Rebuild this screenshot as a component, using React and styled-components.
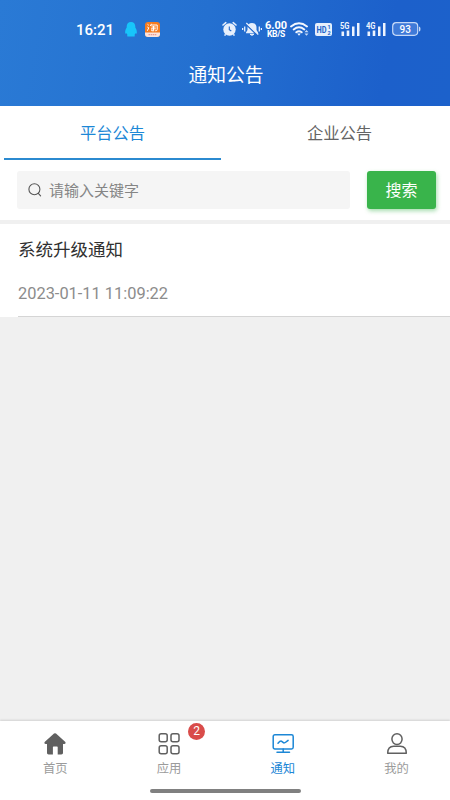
import React, { useState } from 'react'
import styled, { createGlobalStyle } from 'styled-components'

const GlobalStyle = createGlobalStyle`
  * {
    box-sizing: border-box;
  }
  body {
    margin: 0;
    background: #f0f0f0;
    font-family: Roboto, "Noto Sans CJK SC", sans-serif;
  }
`
const Page = styled.div`
  display: flex;
  flex-direction: column;
  width: 450px;
  height: 800px;
  overflow: hidden;
  background: #f0f0f0;
`
const Header = styled.header`
  height: 106px;
  flex: none;
  color: #fff;
  background: linear-gradient(100deg, #2a7ad5 0%, #2470d0 45%, #1c60cb 85%, #1c61cb 100%);
`
const StatusBar = styled.div`
  display: flex;
  align-items: center;
  height: 58px;
  padding-left: 76px;
`
const Time = styled.span`
  width: 49px;
  padding-top: 1px;
  font-size: 15px;
  font-weight: 500;
  line-height: 18px;
`
const StatusIcon = styled.svg`
  display: block;
  flex: none;
  width: ${(props) => props.$w}px;
  height: ${(props) => props.$h}px;
  margin-left: ${(props) => props.$gap || 0}px;
`
const Speed = styled.div`
  display: flex;
  flex-direction: column;
  align-items: center;
  width: 24px;
  margin-left: 2px;
  font-size: 11px;
  font-weight: 700;
  line-height: 9px;
  white-space: nowrap;
`
const SpeedValue = styled.span`
  height: 9px;
`
const SpeedUnit = styled.span`
  height: 8px;
  font-size: 8.5px;
  letter-spacing: -0.3px;
  line-height: 8px;
`
const Title = styled.h1`
  margin: 0;
  font-size: 18.8px;
  font-weight: 400;
  line-height: 28px;
  padding-top: 4px;
  text-align: center;
  padding-left: 2px;
`
const Tabs = styled.nav`
  display: flex;
  flex: none;
  gap: 10px;
  height: 54px;
  padding-left: 4px;
  background: #fff;
`
const Tab = styled.button`
  flex: none;
  width: 217px;
  padding: 0;
  border: 0;
  border-bottom: 2px solid ${(props) => (props.$active ? '#2b8ad0' : 'transparent')};
  background: none;
  color: ${(props) => (props.$active ? '#1c87d6' : '#646464')};
  font-family: inherit;
  font-size: 16.3px;
`
const SearchRow = styled.div`
  display: flex;
  flex: none;
  height: 64px;
  padding: 11px 14px 0 17px;
  border-bottom: 4px solid #f0f0f0;
  background: #fff;
`
const SearchBox = styled.label`
  display: flex;
  align-items: center;
  width: 333px;
  height: 38px;
  padding-left: 11px;
  border-radius: 3px;
  background: #f5f5f5;
`
const SearchInput = styled.input`
  width: 260px;
  margin-left: 7px;
  padding: 1px 0 0;
  border: 0;
  outline: 0;
  background: none;
  font-family: inherit;
  font-size: 15px;
  &::placeholder {
    color: #858585;
  }
`
const SearchButton = styled.button`
  width: 69px;
  height: 38px;
  margin-left: 17px;
  padding: 0 0 2px;
  border: 0;
  border-radius: 3px;
  background: #39b44b;
  box-shadow: 1px 2px 4px rgba(57, 180, 75, 0.45);
  color: #fff;
  font-family: inherit;
  font-size: 16px;
`
const List = styled.main`
  flex: 1;
`
const Notice = styled.article`
  height: 93px;
  padding: 12px 0 0 18px;
  background: #fff;
`
const NoticeBody = styled.div`
  height: 81px;
  padding-top: 1px;
  border-bottom: 1px solid #d5d5d5;
`
const NoticeTitle = styled.h2`
  margin: 0;
  color: #303030;
  font-size: 17.5px;
  font-weight: 400;
  line-height: 26px;
`
const NoticeDate = styled.time`
  display: block;
  margin-top: 21px;
  color: #8c8c8c;
  font-size: 16.4px;
  line-height: 20px;
`
const Footer = styled.footer`
  display: flex;
  flex-direction: column;
  align-items: center;
  flex: none;
  height: 79px;
  background: #fff;
  box-shadow: 0 -1px 2px rgba(0, 0, 0, 0.13);
`
const NavItems = styled.div`
  display: flex;
  flex: none;
  width: 455px;
  height: 68px;
`
const NavItem = styled.div`
  display: flex;
  flex: 1;
  flex-direction: column;
  align-items: center;
  padding: 11px 0 0 2px;
  color: ${(props) => (props.$active ? '#1c87d6' : '#9b9b9b')};
  font-size: 12.3px;
  line-height: 18px;
`
const NavIcon = styled.div`
  position: relative;
  height: 24px;
  margin-bottom: 4px;
  color: ${(props) => (props.$active ? '#1c87d6' : '#606060')};
`
const Badge = styled.span`
  position: absolute;
  top: -9px;
  left: 31px;
  width: 17px;
  height: 17px;
  border-radius: 50%;
  background: #d94c4a;
  color: #fff;
  font-size: 12px;
  line-height: 17px;
  text-align: center;
`
const HomeBar = styled.div`
  width: 151px;
  height: 4px;
  border-radius: 2px;
  background: #808080;
`

const QQIcon = () => (
  <StatusIcon $w={12} $h={15} viewBox="0 0 12 15" fill="#18c5fa">
    <path d="M6 0C3.200 0 1.700 1.800 1.700 4.500v1C.6 7 0 9 .2 11c.1.900.900.900 1.500.3.1.700.4 1.200.900 1.600-.9.500-.6 1.600.7 1.600H8.700c1.300 0 1.600-1.100.7-1.600.5-.4.800-.9.900-1.600.6.600 1.400.600 1.500-.3C12 9 11.400 7 10.300 5.500v-1C10.300 1.800 8.800 0 6 0z" />
  </StatusIcon>
)

const TaobaoIcon = () => (
  <StatusIcon $w={15} $h={15} $gap={8} viewBox="0 0 15 15">
    <rect width="15" height="15" rx="3" fill="#f57c20" />
    <path d="M0 10.500h15V12a3 3 0 0 1-3 3H3a3 3 0 0 1-3-3z" fill="#fbe4df" />
    <path d="M2.500 2.300l1.300 1M2.300 5l1.500.8-1.500 3M6.500 1.800L5.300 4M6 3h6.200v4.500q0 1.500-2 1.300M6.500 5h4.200M6 6.800h4.800M8.500 4v4.500M6.700 7.500v1.300h2.500" fill="none" stroke="#fff" strokeWidth="1" />
    <path d="M3.500 12.700h8" stroke="#e99a92" strokeWidth="1.300" strokeDasharray="1.500 .6" />
  </StatusIcon>
)

const AlarmIcon = () => (
  <StatusIcon $w={15} $h={16} $gap={62} viewBox="0 0 15 16" fill="none" stroke="#e6effc">
    <circle cx="7.500" cy="8.500" r="6.200" fill="#e6effc" stroke="none" />
    <path d="M1 4L3.800 1.700M14 4L11.200 1.700" strokeWidth="1.600" strokeLinecap="round" />
    <path d="M7.300 5.500v3.200l2 1.300" stroke="#2368cc" strokeWidth="1.100" />
    <path d="M3.600 13.200l-1 1.400M11.400 13.200l1 1.400" strokeWidth="1.500" />
  </StatusIcon>
)

const MuteIcon = () => (
  <StatusIcon $w={20} $h={16} $gap={5} viewBox="0 0 20 16" fill="none" stroke="#e6effc">
    <path d="M10 2c-3 0-4.500 2-4.500 4.500V9L4 11.500v.8h12v-.8L14.500 9V6.500C14.500 4 13 2 10 2z" fill="#e6effc" stroke="none" />
    <path d="M8 13.300q2 2 4 0z" fill="#e6effc" />
    <path d="M4 3.300l11.500 11" stroke="#2368cc" strokeWidth="1.500" />
    <path d="M4.300 2l12 11.500" strokeWidth="1.300" />
    <path d="M2.700 5.500v5M17.300 5.500v5M.6 7v2M19.400 7v2" strokeWidth="1.300" />
  </StatusIcon>
)

const WifiIcon = () => (
  <StatusIcon $w={19} $h={16} $gap={2} viewBox="0 0 19 16" fill="none" stroke="#f3f7fe" strokeWidth="1.900">
    <path d="M1 5.500q8-6.500 16 0M3.700 8.500q5.300-4.300 10.600 0M6.300 11.300q2.700-2.200 5.400 0" strokeLinecap="round" />
    <path d="M7.200 12.500h3.600L9 14.700z" fill="#f3f7fe" stroke="none" />
    <path d="M14.500 11.200l2-2.200 2 2.200zM14.500 12.500l2 2.200 2-2.200z" fill="#c6daf7" stroke="none" />
  </StatusIcon>
)

const HdIcon = () => (
  <StatusIcon $w={17} $h={13} $gap={6} viewBox="0 0 17 13">
    <rect width="17" height="13" rx="2" fill="#e6effc" />
    <g fill="#2063c9" fontFamily="Roboto" fontWeight="700">
      <text x="1.500" y="10" fontSize="9.500" textLength="10" lengthAdjust="spacingAndGlyphs">HD</text>
      <text x="12.500" y="6" fontSize="5.500">1</text>
      <text x="12.500" y="11.700" fontSize="5.500">2</text>
    </g>
  </StatusIcon>
)

const SignalIcon = ({ label, gap }) => (
  <StatusIcon $w={20} $h={15} $gap={gap} viewBox="0 0 20 15" fill="#eef4fe">
    <text x="0" y="7" fontSize="9" fontFamily="Roboto" fontWeight="700" textLength="9.500" lengthAdjust="spacingAndGlyphs">{label}</text>
    <path d="M1.500 9.500h2.600V14H1.500zM6.700 8.500h2.600V14H6.700zM12 4.500h2.500V14H12zM17 1h2.500v13H17z" />
  </StatusIcon>
)

const BatteryIcon = () => (
  <StatusIcon $w={29} $h={14} $gap={6} viewBox="0 0 29 14">
    <rect x=".7" y=".7" width="25" height="12.600" rx="3.500" fill="#3f7ad8" stroke="#c4d8f7" strokeWidth="1.200" />
    <path d="M27 4.500q1.500 0 1.500 2.500T27 9.500z" fill="#c4d8f7" />
    <text x="13.200" y="10.500" fontSize="10" fontFamily="Roboto" fontWeight="500" fill="#fff" textAnchor="middle">93</text>
  </StatusIcon>
)

const SearchIcon = () => (
  <svg width="14" height="14" viewBox="0 0 14 14" fill="none" stroke="#555" strokeWidth="1.100" strokeLinecap="round">
    <circle cx="6.400" cy="6.300" r="5.500" />
    <path d="M10.300 10.300l2.300 2.500" />
  </svg>
)

const HomeIcon = () => (
  <svg width="24" height="24" viewBox="0 0 24 24" fill="currentColor">
    <path d="M11 1.600a1.500 1.500 0 0 1 2 0l9.100 8.200c1 .9.500 2.200-.8 2.200H20v8.800c0 1.100-.6 1.700-1.700 1.700h-3.600V15.200c0-.5-.2-.7-.7-.7h-3.400c-.5 0-.7.2-.7.700v7.300H5.700C4.600 22.500 4 21.900 4 20.800V12H2.700c-1.300 0-1.800-1.300-.8-2.200z" />
  </svg>
)

const AppsIcon = () => (
  <svg width="24" height="24" viewBox="0 0 24 24" fill="none" stroke="currentColor" strokeWidth="1.500">
    <rect x="2.200" y="1.800" width="8" height="8" rx="2" />
    <rect x="14" y="1.800" width="8" height="8" rx="2" />
    <rect x="2.200" y="13.700" width="8" height="8" rx="2" />
    <rect x="14" y="13.700" width="8" height="8" rx="2" />
  </svg>
)

const MonitorIcon = () => (
  <svg width="24" height="24" viewBox="0 0 24 24" fill="none" stroke="currentColor" strokeWidth="1.500" strokeLinecap="round">
    <rect x="2.200" y="2.700" width="20" height="14.200" rx="1.700" />
    <path d="M12.200 17v3M6 20.200h12.500" />
    <path d="M7 11.200c1.600-1.800 2.600-2.800 3.700-1.900l1.700 1.400c1.100.9 2.200-.2 4.700-2.300" />
  </svg>
)

const UserIcon = () => (
  <svg width="24" height="24" viewBox="0 0 24 24" fill="none" stroke="currentColor" strokeWidth="1.500" strokeLinejoin="round">
    <ellipse cx="12" cy="7.100" rx="5.100" ry="5.400" />
    <path d="M2.700 21.300c0-4.700 2.600-7 6-7h6.600c3.400 0 6 2.300 6 7z" />
  </svg>
)

const notices = [{ title: '系统升级通知', date: '2023-01-11 11:09:22' }]

const navItems = [
  { label: '首页', Icon: HomeIcon },
  { label: '应用', Icon: AppsIcon, badge: 2 },
  { label: '通知', Icon: MonitorIcon, active: true },
  { label: '我的', Icon: UserIcon },
]

const App = () => {
  const [tab, setTab] = useState('平台公告')

  return (
    <Page>
      <GlobalStyle />
      <Header>
        <StatusBar>
          <Time>16:21</Time>
          <QQIcon />
          <TaobaoIcon />
          <AlarmIcon />
          <MuteIcon />
          <Speed>
            <SpeedValue>6.00</SpeedValue>
            <SpeedUnit>KB/S</SpeedUnit>
          </Speed>
          <WifiIcon />
          <HdIcon />
          <SignalIcon label="5G" gap={8} />
          <SignalIcon label="4G" gap={6} />
          <BatteryIcon />
        </StatusBar>
        <Title>通知公告</Title>
      </Header>
      <Tabs>
        {['平台公告', '企业公告'].map((name) => (
          <Tab key={name} $active={tab === name} onClick={() => setTab(name)}>{name}</Tab>
        ))}
      </Tabs>
      <SearchRow>
        <SearchBox>
          <SearchIcon />
          <SearchInput placeholder="请输入关键字" />
        </SearchBox>
        <SearchButton>搜索</SearchButton>
      </SearchRow>
      <List>
        {notices.map((notice) => (
          <Notice key={notice.date}>
            <NoticeBody>
              <NoticeTitle>{notice.title}</NoticeTitle>
              <NoticeDate>{notice.date}</NoticeDate>
            </NoticeBody>
          </Notice>
        ))}
      </List>
      <Footer>
        <NavItems>
          {navItems.map(({ label, Icon, badge, active }) => (
            <NavItem key={label} $active={active}>
              <NavIcon $active={active}>
                <Icon />
                {badge && <Badge>{badge}</Badge>}
              </NavIcon>
              {label}
            </NavItem>
          ))}
        </NavItems>
        <HomeBar />
      </Footer>
    </Page>
  )
}

export default App
